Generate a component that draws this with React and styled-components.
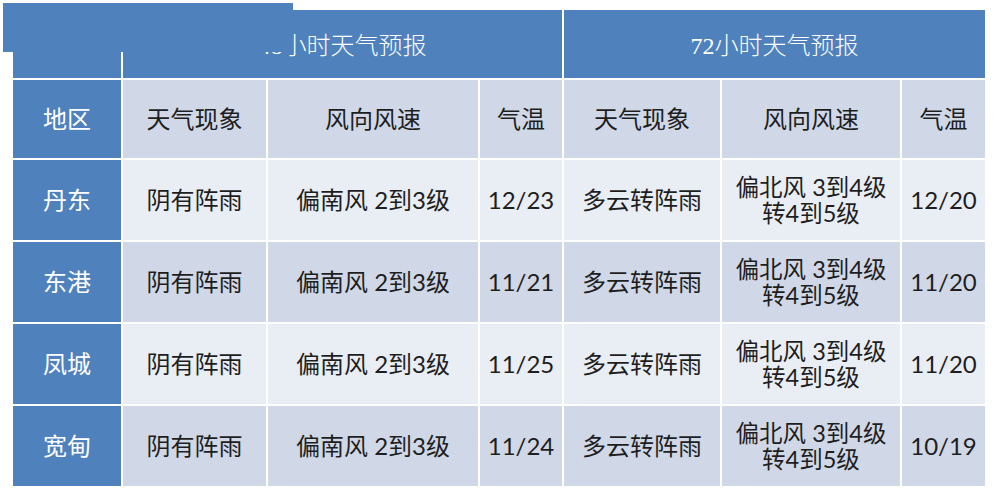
import React from "react";
import styled, { createGlobalStyle } from "styled-components";

const Global = createGlobalStyle`
  html, body { margin: 0; padding: 0; background: #ffffff; }
  body { font-family: "Lato", "Noto Sans CJK SC", sans-serif; }
`;

const BLUE = "#4f81bd";

const Page = styled.div`
  position: relative;
  width: 1005px;
  height: 500px;
  padding: 10px 0 0 13px;
  box-sizing: border-box;
`;

const Grid = styled.div`
  display: grid;
  grid-template-columns: 108px 143px 210px 82px 156px 178px 83px;
  grid-template-rows: 68px 78px 80px 80px 80px 80px;
  gap: 2px;
  width: 972px;
  background: #ffffff;
`;

const Cell = styled.div`
  display: flex;
  align-items: center;
  justify-content: center;
  text-align: center;
  font-size: 24px;
  line-height: 26px;
  color: #1e1e1e;
  background: ${(p) => p.$bg};
  grid-column: ${(p) => p.$span || "auto"};
  font-family: "Lato", "Noto Sans CJK SC", sans-serif;
  white-space: nowrap;
`;

const TitleCell = styled(Cell)`
  background: ${BLUE};
  color: #ffffff;
  font-family: "Liberation Serif", "Noto Sans CJK SC", serif;
  font-size: 24px;
  font-weight: 300;
  padding-top: 4px;
`;

const RegionCell = styled(Cell)`
  background: ${BLUE};
  color: #ffffff;
`;

const TwoLine = styled.div`
  display: flex;
  flex-direction: column;
  align-items: center;
  font-size: 23.5px;
  line-height: 26px;
`;

const Patch = styled.div`
  position: absolute;
  left: 3px;
  top: 3px;
  width: 290px;
  height: 49px;
  background: ${BLUE};
`;

const HEAD_BG = "#d0d8e8";
const rows = [
  { r: "丹东", t: "12/23", t2: "12/20" },
  { r: "东港", t: "11/21", t2: "11/20" },
  { r: "凤城", t: "11/25", t2: "11/20" },
  { r: "宽甸", t: "11/24", t2: "10/19" },
];

export default function App() {
  return (
    <Page>
      <Global />
      <Grid>
        <TitleCell />
        <TitleCell $span="span 3">48小时天气预报</TitleCell>
        <TitleCell $span="span 3">72小时天气预报</TitleCell>

        <RegionCell>地区</RegionCell>
        <Cell $bg={HEAD_BG}>天气现象</Cell>
        <Cell $bg={HEAD_BG}>风向风速</Cell>
        <Cell $bg={HEAD_BG}>气温</Cell>
        <Cell $bg={HEAD_BG}>天气现象</Cell>
        <Cell $bg={HEAD_BG}>风向风速</Cell>
        <Cell $bg={HEAD_BG}>气温</Cell>

        {rows.map((row, i) => {
          const bg = i % 2 === 0 ? "#e9edf4" : "#d0d8e8";
          return (
            <React.Fragment key={row.r}>
              <RegionCell>{row.r}</RegionCell>
              <Cell $bg={bg}>阴有阵雨</Cell>
              <Cell $bg={bg}>偏南风 2到3级</Cell>
              <Cell $bg={bg}>{row.t}</Cell>
              <Cell $bg={bg}>多云转阵雨</Cell>
              <Cell $bg={bg}>
                <TwoLine>
                  <span>偏北风 3到4级</span>
                  <span>转4到5级</span>
                </TwoLine>
              </Cell>
              <Cell $bg={bg}>{row.t2}</Cell>
            </React.Fragment>
          );
        })}
      </Grid>
      <Patch />
    </Page>
  );
}
